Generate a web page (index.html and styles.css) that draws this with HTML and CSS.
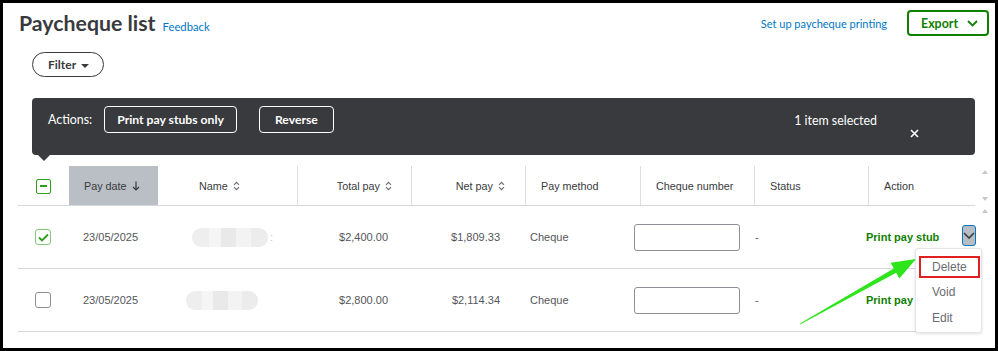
FILE: index.html
```html
<!DOCTYPE html>
<html lang="en">
<head>
    <meta charset="UTF-8">
    <meta name="viewport" content="width=device-width, initial-scale=1.0">
    <title>Paycheque list</title>
    <link rel="stylesheet" href="styles.css">
</head>
<body>
    <div class="frame">
        <header class="page-head">
            <div class="title-group">
                <h1>Paycheque list</h1>
                <a class="link feedback" href="#">Feedback</a>
            </div>
            <div class="head-right">
                <a class="link" href="#">Set up paycheque printing</a>
                <button class="export">Export
                    <svg width="11" height="7" viewBox="0 0 11 7"><polyline points="1,1 5.5,5.5 10,1" fill="none" stroke="#108000" stroke-width="1.8"/></svg>
                </button>
            </div>
        </header>

        <div class="filter-row">
            <button class="filter">Filter <span class="caret"></span></button>
        </div>

        <div class="action-bar">
            <span class="actions-label">Actions:</span>
            <button class="bar-btn">Print pay stubs only</button>
            <button class="bar-btn reverse">Reverse</button>
            <div class="selected">
                <span>1 item selected</span>
                <svg class="close" width="9" height="9" viewBox="0 0 9 9"><path d="M1 1L8 8M8 1L1 8" stroke="#fff" stroke-width="1.6"/></svg>
            </div>
        </div>

        <div class="table-wrap">
            <div class="table">
                <div class="thead">
                    <div class="th cb-cell"><span class="check partial"></span></div>
                    <div class="th sorted">Pay date
                        <svg class="sort" width="8" height="10" viewBox="0 0 8 10"><path d="M4 0.5V9M1 6L4 9L7 6" fill="none" stroke="#393a3d" stroke-width="1.2"/></svg>
                    </div>
                    <div class="th name-th">Name
                        <svg class="updown" width="7" height="10" viewBox="0 0 7 10"><path d="M1 3.8L3.5 1.3L6 3.8M1 6.2L3.5 8.7L6 6.2" fill="none" stroke="#6b6c72" stroke-width="1.1"/></svg>
                    </div>
                    <div class="th num div">Total pay
                        <svg class="updown" width="7" height="10" viewBox="0 0 7 10"><path d="M1 3.8L3.5 1.3L6 3.8M1 6.2L3.5 8.7L6 6.2" fill="none" stroke="#6b6c72" stroke-width="1.1"/></svg>
                    </div>
                    <div class="th num div net-th">Net pay
                        <svg class="updown" width="7" height="10" viewBox="0 0 7 10"><path d="M1 3.8L3.5 1.3L6 3.8M1 6.2L3.5 8.7L6 6.2" fill="none" stroke="#6b6c72" stroke-width="1.1"/></svg>
                    </div>
                    <div class="th div">Pay method</div>
                    <div class="th div">Cheque number</div>
                    <div class="th div">Status</div>
                    <div class="th div">Action</div>
                </div>

                <div class="row">
                    <div class="td cb-cell"><span class="check on">
                        <svg width="11" height="9" viewBox="0 0 11 9"><polyline points="1,4.5 4,7.5 10,1.5" fill="none" stroke="#2ca01c" stroke-width="1.8"/></svg>
                    </span></div>
                    <div class="td">23/05/2025</div>
                    <div class="td name"><span class="blur"></span><span class="colon">:</span></div>
                    <div class="td num">$2,400.00</div>
                    <div class="td num">$1,809.33</div>
                    <div class="td method">Cheque</div>
                    <div class="td cheque"><input type="text"></div>
                    <div class="td status">-</div>
                    <div class="td act">
                        <span class="print">Print pay stub</span>
                        <span class="sep"></span>
                        <span class="more">
                            <svg width="12" height="7" viewBox="0 0 12 7"><polyline points="1,1 6,6 11,1" fill="none" stroke="#393a3d" stroke-width="1.6"/></svg>
                        </span>
                    </div>
                </div>

                <div class="row">
                    <div class="td cb-cell"><span class="check"></span></div>
                    <div class="td">23/05/2025</div>
                    <div class="td name"><span class="blur short"></span></div>
                    <div class="td num">$2,800.00</div>
                    <div class="td num">$2,114.34</div>
                    <div class="td method">Cheque</div>
                    <div class="td cheque"><input type="text"></div>
                    <div class="td status">-</div>
                    <div class="td act"><span class="print">Print pay stub</span></div>
                </div>
            </div>
            <div class="scrollbar">
                <span class="arrow up"></span>
                <span class="arrow down"></span>
                <span class="arrow up second"></span>
            </div>
        </div>

        <ul class="menu">
            <li class="picked">Delete</li>
            <li>Void</li>
            <li>Edit</li>
        </ul>

        <!-- annotation arrow pointing at Delete -->
        <svg class="pointer" width="998" height="351" viewBox="0 0 998 351">
            <polygon points="800,323.5 893.8,268.4 890.7,262.7 916,259 899.3,278.5 896.2,272.8 800.5,324.3" fill="#2ee41a"/>
        </svg>
    </div>
</body>
</html>
```

FILE: styles.css
```css
body {
    margin: 0;
    font-family: Lato, "Open Sans", Arial, sans-serif;
    color: #393a3d;
    background: #fff;
}
.frame {
    position: relative;
    width: 998px;
    height: 351px;
    box-sizing: border-box;
    border: 3px solid #000;
    overflow: hidden;
}
.page-head {
    display: flex;
    justify-content: space-between;
    align-items: center;
    padding: 7px 6px 0 16px;
    height: 26px;
}
.title-group {
    display: flex;
    align-items: baseline;
    gap: 7px;
}
h1 {
    margin: 0;
    font-size: 21.3px;
    font-weight: 700;
    color: #393a3d;
    line-height: 26px;
}
.link {
    color: #0077c5;
    text-decoration: none;
    font-size: 11px;
}
.feedback {
    font-size: 11.3px;
}
.head-right {
    display: flex;
    align-items: center;
    gap: 20px;
}
.export {
    display: flex;
    align-items: center;
    gap: 9px;
    height: 26px;
    padding: 0 9px 0 12px;
    border: 2px solid #108000;
    border-radius: 4px;
    background: #fff;
    color: #108000;
    font-family: inherit;
    font-size: 12.4px;
    font-weight: 700;
}
.filter-row {
    padding: 16px 0 0 29px;
}
.filter {
    display: flex;
    align-items: center;
    gap: 5px;
    height: 25px;
    width: 72px;
    padding: 0 0 0 15px;
    border: 1.5px solid #393a3d;
    border-radius: 13px;
    background: #fff;
    font-family: inherit;
    font-size: 12px;
    font-weight: 700;
    color: #393a3d;
}
.caret {
    width: 0;
    height: 0;
    border-left: 4px solid transparent;
    border-right: 4px solid transparent;
    border-top: 4px solid #393a3d;
    margin-top: 2px;
}
.action-bar {
    position: relative;
    display: flex;
    align-items: flex-start;
    height: 57px;
    box-sizing: border-box;
    margin: 21px 20px 0 29px;
    padding: 8px 56px 0 16px;
    background: #393a3d;
    border-radius: 4px;
    color: #fff;
    font-size: 12.4px;
}
.action-bar::after {
    content: "";
    position: absolute;
    left: 6px;
    bottom: -6px;
    border-left: 6px solid transparent;
    border-right: 6px solid transparent;
    border-top: 6px solid #393a3d;
}
.actions-label {
    line-height: 28px;
    margin-right: 12px;
}
.bar-btn {
    height: 27px;
    padding: 0 12px;
    border: 1.5px solid #fff;
    border-radius: 4px;
    background: transparent;
    color: #fff;
    font-family: inherit;
    font-size: 12.2px;
    font-weight: 700;
    line-height: 21px;
    margin-right: 22px;
}
.reverse {
    padding: 0 15px;
}
.selected {
    display: flex;
    align-items: flex-start;
    gap: 33px;
    margin-left: auto;
    line-height: 29px;
}
.close {
    margin-top: 23px;
}
.table-wrap {
    display: flex;
    margin: 11px 0 0 15px;
}
.table {
    width: 957px;
    font-family: "Liberation Sans", Arial, sans-serif;
}
.thead, .row {
    display: grid;
}
.thead {
    grid-template-columns: 51px 89px 139px 114px 114px 115px 114px 114px 107px;
    height: 40px;
    box-sizing: border-box;
    border-bottom: 1px solid #d4d7dc;
    font-size: 10.8px;
}
.row {
    grid-template-columns: 51px 100px 140px 91px 112px 116px 118px 110px 119px;
    height: 63px;
    box-sizing: border-box;
    border-bottom: 1px solid #d4d7dc;
    color: #55565b;
    font-size: 11px;
}
.th, .td {
    display: flex;
    align-items: center;
    white-space: nowrap;
}
.th {
    padding-left: 15px;
    padding-top: 1px;
    color: #393a3d;
}
.th.div {
    border-left: 1px solid #dcdee2;
}
.th.sorted {
    background: #babec5;
}
.sort {
    margin-left: 5px;
}
.updown {
    margin-left: 5px;
}
.name-th {
    padding-left: 41px;
}
.th.num {
    justify-content: flex-end;
    padding: 1px 19px 0 0;
}
.th.net-th {
    padding-right: 20px;
}
.cb-cell {
    padding-left: 18px;
}
.row .cb-cell {
    padding-left: 17px;
}
.check {
    display: flex;
    align-items: center;
    justify-content: center;
    width: 16px;
    height: 16px;
    box-sizing: border-box;
    border: 1.5px solid #8d9096;
    border-radius: 3px;
}
.check.partial {
    width: 15px;
    height: 15px;
    border-color: #2ca01c;
    border-radius: 2px;
}
.check.partial::before {
    content: "";
    width: 7px;
    height: 2px;
    background: #2ca01c;
}
.check.on {
    border-color: #7fc977;
}
.td {
    padding-left: 14px;
}
.td.name {
    padding-left: 23px;
}
.blur {
    width: 76px;
    height: 19px;
    border-radius: 9px;
    background: linear-gradient(90deg, #eeeeee 0 22%, #f5f5f5 22% 38%, #e9e9e9 38% 58%, #f3f3f3 58% 78%, #ececec 78%);
}
.blur.short {
    width: 72px;
    margin-left: -6px;
}
.colon {
    margin-left: 2px;
    color: #c8c8c8;
}
.td.num {
    justify-content: flex-end;
    padding: 0 12px 0 0;
}
.td.method {
    padding-left: 18px;
}
.td.cheque {
    padding-left: 6px;
}
.td.cheque input {
    width: 106px;
    height: 27px;
    box-sizing: border-box;
    border: 1px solid #8d9096;
    border-radius: 3px;
}
.td.status {
    padding-left: 9px;
}
.td.act {
    padding-left: 10px;
}
.print {
    color: #108000;
    font-weight: 700;
}
.sep {
    width: 2px;
    height: 21px;
    margin-left: 21px;
    background: #8d9096;
}
.more {
    display: flex;
    align-items: center;
    justify-content: center;
    width: 19px;
    height: 21px;
    margin: -3px 0 0 2px;
    box-sizing: border-box;
    border: 1.5px solid #0077c5;
    border-radius: 3px;
    background: #b8bcc3;
}
.scrollbar {
    position: relative;
    width: 20px;
}
.arrow {
    position: absolute;
    left: 7px;
    border-left: 3px solid transparent;
    border-right: 3px solid transparent;
}
.arrow.up {
    top: 4px;
    border-bottom: 4px solid #c5c7cb;
}
.arrow.down {
    top: 31px;
    border-top: 4px solid #c5c7cb;
}
.arrow.up.second {
    top: 43px;
}
.menu {
    position: absolute;
    left: 912px;
    top: 245px;
    width: 67px;
    height: 85px;
    box-sizing: border-box;
    margin: 0;
    padding: 7px 1px 0 3px;
    list-style: none;
    background: #fff;
    border: 1px solid #e3e5e8;
    border-radius: 3px;
    box-shadow: 0 1px 3px rgba(0, 0, 0, 0.12);
    font-family: "Liberation Sans", Arial, sans-serif;
    font-size: 12px;
    color: #6b6c72;
}
.menu li {
    height: 26px;
    line-height: 26px;
    padding-left: 13px;
}
.menu li.picked {
    height: 22px;
    line-height: 19px;
    box-sizing: border-box;
    border: 2px solid #e02020;
    padding-left: 11px;
    margin-bottom: 1px;
}
.pointer {
    position: absolute;
    left: -3px;
    top: -3px;
    pointer-events: none;
}
```
